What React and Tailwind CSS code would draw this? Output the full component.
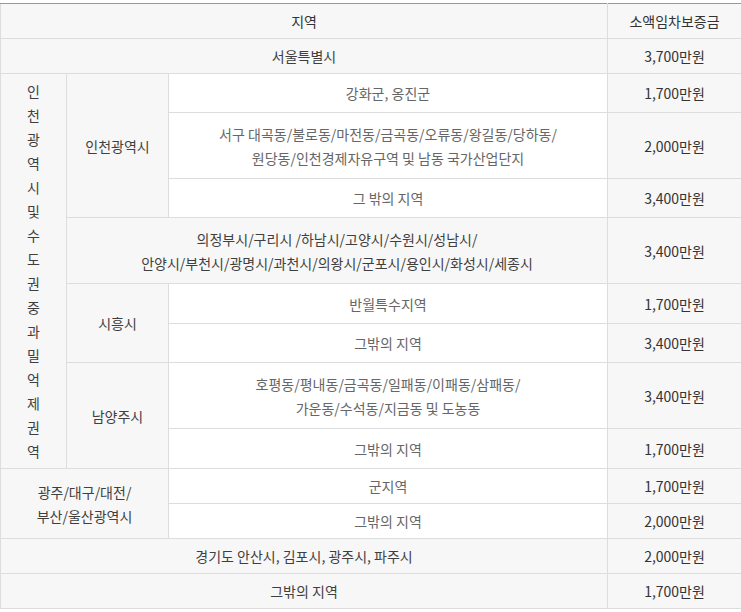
import React from 'react';

const font = { fontFamily: '"Noto Sans CJK KR", "Noto Sans", sans-serif' };

const gray = 'bg-[#f7f7f7] text-[#3f3f3f]';
const white = 'bg-white text-[#666]';
const cell = 'border border-[#dddddd] text-center align-middle px-2 py-0 leading-6';

const Money = ({ children }) => (
  <td className={`${cell} ${gray} text-[#333]`}>{children}</td>
);

export default function App() {
  const vertical = '인천광역시및수도권중과밀억제권역'.split('');

  return (
    <div className="w-[741px] h-[612px] bg-white pt-[3px]" style={font}>
      <table className="w-full table-fixed border-collapse text-[14px]">
        <colgroup>
          <col className="w-[66px]" />
          <col className="w-[102px]" />
          <col className="w-[439px]" />
          <col className="w-[134px]" />
        </colgroup>
        <tbody>
          <tr className="h-[35px] border-t border-t-[#999]">
            <td colSpan={3} className={`${cell} ${gray} text-[#333] border-t-[#999]`}>지역</td>
            <td className={`${cell} ${gray} text-[#333] border-t-[#999]`}>소액임차보증금</td>
          </tr>
          <tr className="h-[35px]">
            <td colSpan={3} className={`${cell} ${gray}`}>서울특별시</td>
            <Money>3,700만원</Money>
          </tr>

          {/* 인천광역시 및 수도권 중 과밀억제권역 */}
          <tr className="h-[39px]">
            <td rowSpan={8} className={`${cell} ${gray} !px-0`}>
              <div className="flex flex-col items-center">
                {vertical.map((ch, i) => (
                  <span key={i} className="block leading-6">{ch}</span>
                ))}
              </div>
            </td>
            <td rowSpan={3} className={`${cell} ${gray}`}>인천광역시</td>
            <td className={`${cell} ${white}`}>강화군, 옹진군</td>
            <Money>1,700만원</Money>
          </tr>
          <tr className="h-[66px]">
            <td className={`${cell} ${white}`}>
              서구 대곡동/불로동/마전동/금곡동/오류동/왕길동/당하동/
              <br />
              원당동/인천경제자유구역 및 남동 국가산업단지
            </td>
            <Money>2,000만원</Money>
          </tr>
          <tr className="h-[39px]">
            <td className={`${cell} ${white}`}>그 밖의 지역</td>
            <Money>3,400만원</Money>
          </tr>
          <tr className="h-[66px]">
            <td colSpan={2} className={`${cell} ${gray}`}>
              의정부시/구리시 /하남시/고양시/수원시/성남시/
              <br />
              안양시/부천시/광명시/과천시/의왕시/군포시/용인시/화성시/세종시
            </td>
            <Money>3,400만원</Money>
          </tr>
          <tr className="h-[40px]">
            <td rowSpan={2} className={`${cell} ${gray}`}>시흥시</td>
            <td className={`${cell} ${white}`}>반월특수지역</td>
            <Money>1,700만원</Money>
          </tr>
          <tr className="h-[39px]">
            <td className={`${cell} ${white}`}>그밖의 지역</td>
            <Money>3,400만원</Money>
          </tr>
          <tr className="h-[66px]">
            <td rowSpan={2} className={`${cell} ${gray}`}>남양주시</td>
            <td className={`${cell} ${white}`}>
              호평동/평내동/금곡동/일패동/이패동/삼패동/
              <br />
              가운동/수석동/지금동 및 도농동
            </td>
            <Money>3,400만원</Money>
          </tr>
          <tr className="h-[40px]">
            <td className={`${cell} ${white}`}>그밖의 지역</td>
            <Money>1,700만원</Money>
          </tr>

          {/* 광역시 */}
          <tr className="h-[35px]">
            <td rowSpan={2} colSpan={2} className={`${cell} ${gray}`}>
              광주/대구/대전/
              <br />
              부산/울산광역시
            </td>
            <td className={`${cell} ${white}`}>군지역</td>
            <Money>1,700만원</Money>
          </tr>
          <tr className="h-[35px]">
            <td className={`${cell} ${white}`}>그밖의 지역</td>
            <Money>2,000만원</Money>
          </tr>
          <tr className="h-[35px]">
            <td colSpan={3} className={`${cell} ${gray}`}>경기도 안산시, 김포시, 광주시, 파주시</td>
            <Money>2,000만원</Money>
          </tr>
          <tr className="h-[35px]">
            <td colSpan={3} className={`${cell} ${gray}`}>그밖의 지역</td>
            <Money>1,700만원</Money>
          </tr>
        </tbody>
      </table>
    </div>
  );
}
